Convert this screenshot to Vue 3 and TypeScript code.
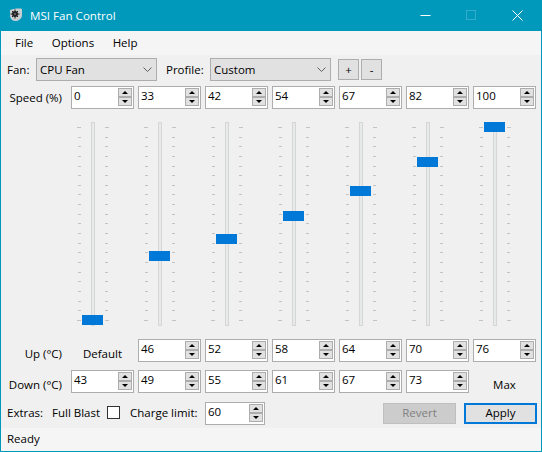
<template>
  <div class="window">
    <div class="titlebar">
      <svg class="app-icon" width="14" height="14" viewBox="0 0 14 14">
        <path d="M1 2 C4 1 10 0 13 1 L13 7 C13 11 9 13 6 13 C3 13 1 10 1 7 Z" fill="#c9ced1" />
        <circle cx="6" cy="6" r="3" fill="#222" />
        <path d="M6 1.500V10.500M1.500 6H10.500M3 3L9 9M9 3L3 9" stroke="#222" stroke-width="1" />
        <circle cx="6" cy="6" r="0.9" fill="#777" />
      </svg>
      <span class="title">MSI Fan Control</span>
      <div class="win-buttons">
        <svg width="46" height="31" viewBox="0 0 46 31"><path d="M17.500 15.500H27.500" stroke="#fff" /></svg>
        <svg width="46" height="31" viewBox="0 0 46 31"><rect x="17.500" y="10.500" width="9" height="9" fill="none" stroke="#33adc9" /></svg>
        <svg width="46" height="31" viewBox="0 0 46 31"><path d="M17.500 10.500L27.500 20.500M27.500 10.500L17.500 20.500" stroke="#fff" /></svg>
      </div>
    </div>

    <div class="menubar">
      <span v-for="item in menuItems" :key="item" class="menu-item">{{ item }}</span>
    </div>

    <div class="content">
      <div class="fan-row">
        <label class="fan-label">Fan:</label>
        <div class="combo">
          <span>CPU Fan</span>
          <svg width="9" height="5" viewBox="0 0 9 5"><path d="M0.500 0.500L4.500 4.500L8.500 0.500" fill="none" stroke="#606060" /></svg>
        </div>
        <label class="profile-label">Profile:</label>
        <div class="combo">
          <span>Custom</span>
          <svg width="9" height="5" viewBox="0 0 9 5"><path d="M0.500 0.500L4.500 4.500L8.500 0.500" fill="none" stroke="#606060" /></svg>
        </div>
        <button class="small-btn first">+</button>
        <button class="small-btn">-</button>
      </div>

      <div class="curve-grid">
        <div class="row-label speed-label">Speed (%)</div>
        <div v-for="(v, i) in speeds" :key="'s' + i" class="spin">
          <span class="spin-value">{{ v }}</span>
          <div class="spin-buttons">
            <span class="spin-up"></span>
            <span class="spin-down"></span>
          </div>
        </div>

        <div class="slider-spacer"></div>
        <div v-for="(v, i) in speeds" :key="'t' + i" class="slider">
          <div class="ticks">
            <span v-for="n in 21" :key="n" class="tick" :class="{ long: n === 1 || n === 21 }"></span>
          </div>
          <div class="track"></div>
          <div class="ticks right">
            <span v-for="n in 21" :key="n" class="tick" :class="{ long: n === 1 || n === 21 }"></span>
          </div>
          <div class="thumb" :style="{ top: thumbTop(v) + 'px' }"></div>
        </div>

        <div class="row-label up-label">Up (°C)</div>
        <div class="default-label">Default</div>
        <div v-for="(v, i) in ups" :key="'u' + i" class="spin">
          <span class="spin-value">{{ v }}</span>
          <div class="spin-buttons">
            <span class="spin-up"></span>
            <span class="spin-down"></span>
          </div>
        </div>

        <div class="row-label down-label">Down (°C)</div>
        <div v-for="(v, i) in downs" :key="'d' + i" class="spin down-spin">
          <span class="spin-value">{{ v }}</span>
          <div class="spin-buttons">
            <span class="spin-up"></span>
            <span class="spin-down"></span>
          </div>
        </div>
        <div class="max-label">Max</div>
      </div>

      <div class="extras-row">
        <span class="extras-label">Extras:</span>
        <span class="blast-label">Full Blast</span>
        <span class="checkbox"></span>
        <span class="charge-label">Charge limit:</span>
        <div class="spin charge">
          <span class="spin-value">60</span>
          <div class="spin-buttons">
            <span class="spin-up"></span>
            <span class="spin-down"></span>
          </div>
        </div>
        <button class="action revert" disabled>Revert</button>
        <button class="action apply">Apply</button>
      </div>
    </div>

    <div class="statusbar">Ready</div>
  </div>
</template>

<script setup lang="ts">
const menuItems: string[] = ['File', 'Options', 'Help']
const speeds: number[] = [0, 33, 42, 54, 67, 82, 100]
const ups: number[] = [46, 52, 58, 64, 70, 76]
const downs: number[] = [43, 49, 55, 61, 67, 73]

// thumb travels 193px for 0-100
const thumbTop = (value: number): number => Math.round(206 - (value / 100) * 193)
</script>

<style>
html,
body {
  margin: 0;
  background: #f0f0f0;
}
</style>

<style scoped>
.window {
  width: 542px;
  height: 452px;
  box-sizing: border-box;
  display: flex;
  flex-direction: column;
  border: 1px solid #0099bc;
  border-top: none;
  font-family: "Open Sans", "Noto Sans", sans-serif;
  font-size: 11.5px;
  color: #000;
  overflow: hidden;
}

.titlebar {
  height: 31px;
  flex: none;
  display: flex;
  align-items: center;
  background: #0099bc;
  color: #fff;
  padding-left: 8px;
}

.app-icon {
  flex: none;
  margin-bottom: 2px;
}

.title {
  margin-left: 7px;
  font-size: 11.6px;
}

.win-buttons {
  margin-left: auto;
  display: flex;
}

.win-buttons svg {
  display: block;
}

.menubar {
  height: 24px;
  flex: none;
  display: flex;
  align-items: center;
  background: #f5f5f5;
  padding-left: 14px;
  padding-bottom: 1px;
  box-sizing: border-box;
  gap: 18.500px;
}

.content {
  flex: 1;
  background: #f0f0f0;
  display: flex;
  flex-direction: column;
}

.fan-row {
  height: 23px;
  margin-top: 3px;
  display: flex;
  align-items: center;
}

.fan-label {
  margin-left: 6px;
  width: 29px;
}

.profile-label {
  margin-left: 9px;
  width: 44px;
}

.combo {
  width: 121px;
  height: 23px;
  box-sizing: border-box;
  border: 1px solid #adadad;
  background: #e1e1e1;
  display: flex;
  align-items: center;
  justify-content: space-between;
  padding: 0 4px 0 3px;
}

.small-btn {
  width: 21px;
  height: 21px;
  padding: 0;
  margin-left: 2px;
  box-sizing: border-box;
  border: 1px solid #adadad;
  background: #e1e1e1;
  font: inherit;
  color: #000;
}

.small-btn.first {
  margin-left: 7px;
}

.curve-grid {
  margin-top: 5px;
  display: grid;
  grid-template-columns: 66px repeat(7, 63px);
  column-gap: 4px;
  grid-template-rows: 23px 230px 23px 8px 23px;
}

.row-label {
  align-self: center;
  text-align: right;
  margin-right: 5px;
  white-space: nowrap;
}

.speed-label {
  margin-bottom: 1px;
}

.up-label,
.down-label {
  margin-top: 5px;
}

.down-label,
.down-spin,
.max-label {
  grid-row: 5;
}

.default-label,
.max-label {
  align-self: center;
  text-align: center;
  margin-top: 5px;
}

.spin {
  height: 23px;
  box-sizing: border-box;
  border: 1px solid #adadad;
  background: #fff;
  display: flex;
  align-items: flex-start;
  justify-content: space-between;
  padding: 1px;
}

.spin-value {
  line-height: 14px;
  margin-left: 1px;
  margin-top: 1px;
}

.spin-buttons {
  display: flex;
  flex-direction: column;
  width: 14px;
}

.spin-up,
.spin-down {
  position: relative;
  height: 9px;
  box-sizing: border-box;
  border: 1px solid #adadad;
  background: #e1e1e1;
}

.spin-up::after,
.spin-down::after {
  content: "";
  position: absolute;
  left: 3px;
  top: 2px;
  border-left: 3px solid transparent;
  border-right: 3px solid transparent;
}

.spin-up::after {
  border-bottom: 3px solid #000;
}

.spin-down::after {
  border-top: 3px solid #000;
}

.slider-spacer {
  grid-row: 2;
}

.slider {
  position: relative;
  display: flex;
  gap: 10px;
  padding: 13px 0 0 6px;
}

.track {
  width: 4px;
  height: 204px;
  box-sizing: border-box;
  border: 1px solid #d6d6d6;
  background: #e7eaea;
}

.ticks {
  width: 4px;
  height: 194px;
  margin-top: 5px;
  display: flex;
  flex-direction: column;
  justify-content: space-between;
  align-items: flex-end;
}

.ticks.right {
  align-items: flex-start;
}

.tick {
  width: 3px;
  height: 1px;
  background: #c4c4c4;
}

.tick.long {
  width: 4px;
}

.thumb {
  position: absolute;
  left: 11px;
  width: 21px;
  height: 10px;
  background: #0078d7;
}

.extras-row {
  margin-top: 9px;
  height: 23px;
  display: flex;
  align-items: center;
}

.extras-label {
  margin-left: 6px;
  margin-bottom: 2px;
  width: 45px;
}

.blast-label {
  margin-bottom: 2px;
  width: 55px;
}

.checkbox {
  width: 13px;
  height: 13px;
  box-sizing: border-box;
  border: 1px solid #333;
  background: #fff;
  margin-bottom: 3px;
}

.charge-label {
  margin-left: 10px;
  margin-bottom: 2px;
  width: 75px;
}

.spin.charge {
  width: 60px;
}

.action {
  width: 73px;
  height: 21px;
  padding: 0 0 2px;
  box-sizing: border-box;
  font: inherit;
  background: #e1e1e1;
  border: 1px solid #adadad;
  color: #000;
}

.revert {
  margin-left: 118px;
  background: #cccccc;
  border-color: #bfbfbf;
  color: #808080;
}

.apply {
  margin-left: 8px;
  border: 2px solid #0078d7;
}

.statusbar {
  height: 23px;
  flex: none;
  box-sizing: border-box;
  padding: 0 0 2px 6px;
  background: #f5f5f5;
  display: flex;
  align-items: center;
}
</style>
